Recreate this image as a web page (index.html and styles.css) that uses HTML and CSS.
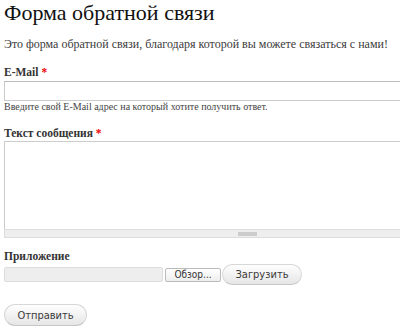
FILE: index.html
```html
<!DOCTYPE html>
<html lang="ru">
<head>
  <meta charset="UTF-8">
  <title>Форма обратной связи</title>
  <link rel="stylesheet" href="styles.css">
</head>
<body>
  <div class="page">
    <h1 class="title">Форма обратной связи</h1>
    <p class="intro">Это форма обратной связи, благодаря которой вы можете связаться с нами!</p>

    <form class="feedback">
      <div class="form-item email">
        <label for="email">E-Mail <span class="required">*</span></label>
        <input type="text" id="email" class="form-text">
        <div class="description">Введите свой E-Mail адрес на который хотите получить ответ.</div>
      </div>

      <div class="form-item message">
        <label for="message">Текст сообщения <span class="required">*</span></label>
        <div class="resizable">
          <textarea id="message" class="form-textarea"></textarea>
          <div class="grippie"><span></span></div>
        </div>
      </div>

      <div class="form-item attach">
        <label>Приложение</label>
        <div class="file-row">
          <span class="file-field"></span>
          <span class="browse">Обзор...</span>
          <button type="button" class="btn upload">Загрузить</button>
        </div>
      </div>

      <div class="actions">
        <button type="button" class="btn submit">Отправить</button>
      </div>
    </form>
  </div>
</body>
</html>
```

FILE: styles.css
```css
body {
  margin: 0;
  background: #fff;
  color: #3b3b3b;
  font-family: "Liberation Serif", Georgia, serif;
  overflow: hidden;
}

.page {
  padding: 0 4px;
}

.title {
  font-size: 22px;
  font-weight: normal;
  color: #111;
  margin: 0;
  line-height: 26px;
}

.intro {
  font-size: 12px;
  margin: 10px 0 0;
  line-height: 16px;
}

.form-item label {
  display: block;
  font-size: 11.5px;
  font-weight: bold;
  color: #333;
  line-height: 16px;
}

.email {
  margin-top: 12px;
}

.message {
  margin-top: 12px;
}

.attach {
  margin-top: 10px;
}

.required {
  color: #e00;
}

.form-text {
  display: block;
  box-sizing: border-box;
  width: 487px;
  height: 20px;
  margin: 1px 0 0;
  border: 1px solid #ccc;
  border-top-color: #bbb;
  padding: 2px 4px;
}

.description {
  font-size: 10px;
  color: #444;
  line-height: 12px;
  margin-top: 0;
}

.resizable {
  width: 487px;
}

.form-textarea {
  display: block;
  box-sizing: border-box;
  width: 100%;
  height: 88px;
  margin: 0;
  border: 1px solid #ccc;
  border-bottom: none;
  resize: none;
}

.grippie {
  box-sizing: border-box;
  height: 9px;
  background: #eee;
  border: 1px solid #ddd;
  display: flex;
  justify-content: center;
  align-items: center;
}

.grippie span {
  width: 19px;
  height: 4px;
  background: #ccc;
}

.file-row {
  display: flex;
  align-items: center;
  height: 21px;
}

.file-field {
  box-sizing: border-box;
  width: 159px;
  height: 15px;
  background: #eee;
  border: 1px solid #ddd;
  border-radius: 2px;
}

.browse {
  box-sizing: border-box;
  width: 56px;
  height: 14px;
  margin-left: 2px;
  text-align: center;
  font-family: "DejaVu Sans Condensed", "DejaVu Sans", Verdana, sans-serif;
  font-size: 10px;
  color: #333;
  line-height: 12px;
  border: 1px solid #bbb;
  border-radius: 2px;
  background: linear-gradient(#fff, #eee);
}

.btn {
  box-sizing: border-box;
  font-family: "DejaVu Sans Condensed", "DejaVu Sans", Verdana, sans-serif;
  font-size: 11px;
  color: #3a3a3a;
  padding: 0;
  border: 1px solid #d8d8d8;
  border-bottom-color: #c6c6c6;
  border-radius: 11px;
  background: linear-gradient(#fefefe, #e6e6e6);
}

.upload {
  width: 80px;
  height: 21px;
  margin-left: 1px;
}

.actions {
  margin-top: 19px;
}

.submit {
  width: 83px;
  height: 22px;
}
```
